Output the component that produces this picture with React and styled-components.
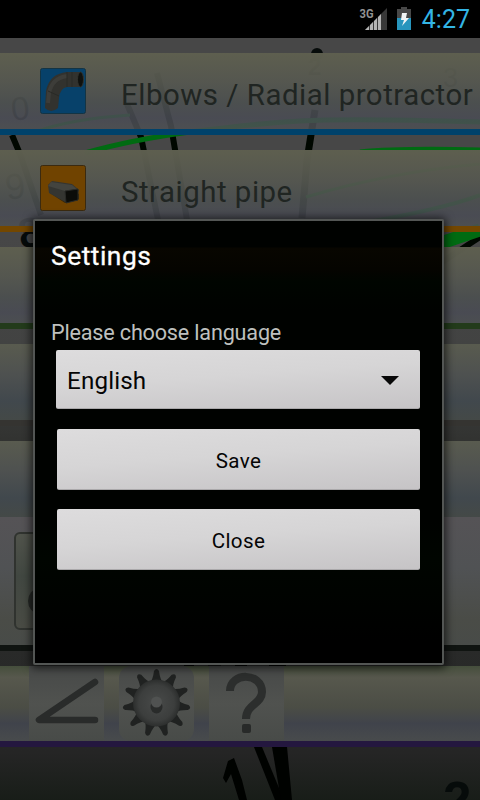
import React, { useState } from "react";
import styled, { createGlobalStyle } from "styled-components";

const GlobalStyle = createGlobalStyle`
  * {
    box-sizing: border-box;
  }
  body {
    margin: 0;
    background: #000;
    font-family: Roboto, "Noto Sans", sans-serif;
  }
`;

const Screen = styled.div`
  position: relative;
  width: 480px;
  height: 800px;
  overflow: hidden;
  display: flex;
  flex-direction: column;
  background: #000;
`;

const StatusBar = styled.header`
  height: 38px;
  flex: none;
  display: flex;
  justify-content: flex-end;
  align-items: flex-start;
  padding: 6px 10px 0 0;
  background: #000;
`;

const StatusIcons = styled.svg`
  display: block;
  margin-right: 9px;
`;

const Clock = styled.span`
  color: #33b5e5;
  font-size: 25px;
  line-height: 28px;
`;

const Page = styled.main`
  position: relative;
  flex: 1;
  padding-top: 15px;
  background: linear-gradient(
    #474747 0,
    #474747 200px,
    #414241 330px,
    #323331 400px,
    #292a29 610px,
    #252525 715px,
    #181d18 762px
  );
`;

const Backdrop = styled.svg`
  position: absolute;
  left: 0;
  top: 0;
`;

const Row = styled.div`
  position: relative;
  display: flex;
  align-items: center;
  height: 82px;
  margin-bottom: 15px;
  padding-left: 40px;
  border-bottom: 6px solid ${props => props.line};
  background: ${props =>
    props.fill ||
    "linear-gradient(rgba(94,95,79,.99), rgba(85,87,80,.94) 40%, rgba(76,80,80,.89) 66%, rgba(74,76,85,.86) 86%, rgba(77,80,83,.86))"};
  background-clip: padding-box;
`;

const RowIcon = styled.svg`
  flex: none;
  width: 46px;
  height: 46px;
`;

const RowLabel = styled.span`
  margin-left: 35px;
  padding-top: 8px;
  white-space: nowrap;
  font-size: 29.4px;
  letter-spacing: 0.52px;
  color: #202522;
`;

const PhotoRow = styled(Row)`
  height: 134px;
  margin-top: -21px;
  padding-left: 14px;
  padding-bottom: 1px;
`;

const PhotoFrame = styled.div`
  display: flex;
  align-items: center;
  width: 98px;
  height: 98px;
  padding: 40px 0 0 12px;
  border: 2px solid #30332f;
  border-radius: 6px;
  background: linear-gradient(#50534b, #414741 45%, #494b44);
`;

const Knob = styled.div`
  width: 20px;
  height: 24px;
  border-radius: 50%;
  background: #252825;
`;

const ToolRow = styled(Row)`
  height: 81px;
  padding-left: 29px;
  gap: 15px;
  margin-bottom: 0;
`;

const Tool = styled.button`
  width: 75px;
  height: 75px;
  padding: 0;
  border: 0;
  border-radius: ${props => (props.round ? 12 : 0)}px;
  background: linear-gradient(#474948, #50524f 50%, #484b48);

  svg {
    display: block;
  }
`;

const Dialog = styled.section`
  position: absolute;
  left: 33px;
  top: 219px;
  width: 411px;
  height: 446px;
  padding: 19px 22px 0 16px;
  border: 2px solid #535654;
  border-radius: 2px;
  background: linear-gradient(#000200, #000200 26px, #080600 27px, #050400 48px, #000500 60px, #000200 90px, #000200 300px, #000500 338px, #000 420px);
  box-shadow: 0 1px 9px 2px rgba(0, 0, 0, 0.65);
`;

const Title = styled.h1`
  margin: 0;
  height: 32px;
  line-height: 32px;
  font-size: 26.4px;
  font-weight: 400;
  letter-spacing: 0.5px;
  color: #fff;
  -webkit-text-stroke: 0.3px #fff;
`;

const Caption = styled.label`
  display: block;
  margin-top: 49px;
  height: 29px;
  line-height: 24px;
  font-size: 21.6px;
  letter-spacing: -0.18px;
  color: #bec0be;
`;

const Surface = styled.button`
  display: flex;
  align-items: center;
  justify-content: center;
  width: 363px;
  height: 61px;
  margin: 0 0 19px 6px;
  padding: 3px 0 0;
  border: 0;
  border-bottom: 1px solid #aaa8aa;
  border-radius: 2px;
  background: linear-gradient(176deg, #dddcdd, #d6d5d6 45%, #c6c4c6);
  font-family: inherit;
  font-size: 20.6px;
  letter-spacing: 0.4px;
  color: #050505;
`;

const Picker = styled(Surface)`
  justify-content: space-between;
  width: 364px;
  height: 59px;
  margin: 0 0 20px 5px;
  padding: 3px 21px 0 11px;
  font-size: 24.2px;
  letter-spacing: 0.15px;
`;

const Arrow = styled.span`
  border: 9px solid transparent;
  border-top-color: #080808;
  border-bottom: 0;
`;

const StatusGlyphs = () => (
  <StatusIcons width="54" height="26" viewBox="0 0 54 26">
    <text x="0.500" y="11.5" fontSize="13" fontWeight="700" fill="#929292" textLength="14" lengthAdjust="spacingAndGlyphs">3G</text>
    <path d="M6 24 28 2V24Z" fill="#383838" />
    <path d="M6 24 10 20V24ZM11 19 14 16V24H11ZM15 15 18 12V24H15ZM19 11 22 8V24H19Z" fill="#b5b5b5" />
    <path d="M38 3h4V1h6v2h4v21H38Z" fill="#484848" />
    <path d="M38 12H52V24H38Z" fill="#2795bd" />
    <path d="M43 7h5l-1 5h3l-7 8 2-6h-3Z" fill="#f2f5f6" />
  </StatusIcons>
);

// Dial face that shows between and through the rows
const DialFace = () => (
  <Backdrop width="480" height="762" viewBox="0 38 480 762" fill="none">
    <g stroke="#000700" strokeWidth="6">
      <path d="M12 135 20 154 41 215" />
      <path d="M127 104 141 137 158 220M157 73 171 126 187 220" />
      <path d="M315 110 307 160 302 218" strokeWidth="7" />
      <path d="M436 266 480 237" />
    </g>
    <g stroke="#006b12" strokeWidth="5">
      <path d="M35 132Q70 119 130 115" strokeWidth="3" />
      <path d="M85 153Q130 140 190 132T300 121T480 122" />
      <path d="M306 197Q390 172 480 164" strokeWidth="3" />
      <path d="M360 152Q400 148 480 150" />
      <path d="M350 225Q440 210 480 195" strokeWidth="4" />
      <path d="M441 243 480 230" strokeWidth="13" />
    </g>
    <g fill="#060b0a" fontFamily="Liberation Sans" fontWeight="700">
      <circle cx="317" cy="54" r="6" />
      <text x="11" y="120" fontSize="33" fontWeight="400" transform="rotate(-6 18 108)">0</text>
      <text x="5" y="199" fontSize="36" fontWeight="400" transform="rotate(-8 14 185)">9</text>
      <text x="18" y="247" fontSize="42" transform="rotate(-10 29 230)">8</text>
      <text x="443" y="87" fontSize="27" fontWeight="400">3</text>
      <text x="308" y="75" fontSize="24">2</text>
      <text x="443" y="818" fontSize="51">2</text>
    </g>
    <g fill="#000200">
      <path d="M254 747H262L284 800H275Z" />
      <path d="M272 747H287L292 800H281Z" />
      <path d="M223 778 228 761 234 758 242 780 247 800H239L231 774 226 783Z" />
    </g>
    <path d="M184 664h10M208 663h13M235 664h12M269 664h17" stroke="#000" strokeWidth="5" />
  </Backdrop>
);

const ElbowIcon = () => (
  <RowIcon viewBox="0 0 46 46">
    <rect x=".5" y=".5" width="45" height="45" rx="2" fill="#07416a" stroke="#143444" />
    <path d="M5 40 6 23Q9 6 27 4H41V19H27Q20 20 19 30L18 40Q11 46 5 40Z" fill="#32322e" />
    <path d="M8 35 9 25Q12 10 27 8" fill="none" stroke="#3d3d39" strokeWidth="4" />
    <path d="M27 4V19M32 4V19M8 23 19 28" stroke="#292a26" />
    <ellipse cx="40.500" cy="11.500" rx="3" ry="7.500" fill="#10110e" stroke="#31332e" />
  </RowIcon>
);

const PipeIcon = () => (
  <RowIcon viewBox="0 0 46 46">
    <rect x=".5" y=".5" width="45" height="45" rx="2" fill="#704300" stroke="#3b2a10" />
    <path d="M10 28 25 38 39 34V29L20 21Z" fill="#382606" />
    <path d="M8 20 12 16 32 19 39 25 34 36 25 37 9 28Z" fill="#343531" />
    <path d="M11 17 32 20 37 24 25 26 8 21Z" fill="#43443f" />
    <path d="M25 26 38 24 38 35 26 38Z" fill="#0b0c09" stroke="#292a27" />
  </RowIcon>
);

const AngleIcon = () => (
  <svg width="75" height="75" viewBox="0 0 75 75">
    <path d="M66 16 10 54H66" fill="none" stroke="#292b2a" strokeWidth="6.500" strokeLinecap="round" strokeLinejoin="round" />
  </svg>
);

const GearIcon = () => (
  <svg width="75" height="75" viewBox="0 0 75 75">
    <defs>
      <radialGradient id="gear">
        <stop offset=".2" stopColor="#454746" />
        <stop offset=".75" stopColor="#3c3e3d" />
        <stop offset="1" stopColor="#2c2e2d" />
      </radialGradient>
    </defs>
    {[...Array(11)].map((_, i) => (
      <path
        key={i}
        d="M31 17Q34 13 35 5Q37.500 1 40 5Q41 13 44 17Z"
        fill="#202221"
        transform={`rotate(${(i * 360) / 11} 37.500 37)`}
      />
    ))}
    <circle cx="37.500" cy="37" r="23.500" fill="url(#gear)" />
    <ellipse cx="37.500" cy="41" rx="6" ry="6.500" fill="#292b2a" />
    <circle cx="37.500" cy="36" r="5.500" fill="#505251" />
  </svg>
);

const HelpIcon = () => (
  <svg width="75" height="75" viewBox="0 0 75 75">
    <path d="M21 25C21 6 53 6 53 26C53 38 37 38 37 53" fill="none" stroke="#2c2e2d" strokeWidth="8" />
    <rect x="33" y="58" width="9" height="9" rx="2" fill="#282a29" />
  </svg>
);

const lowerFill = "linear-gradient(#595b4f, #4e5150 40%, #41484d 75%, #444947)";

function App() {
  const [language] = useState("English");

  return (
    <>
      <GlobalStyle />
      <Screen>
        <StatusBar>
          <StatusGlyphs />
          <Clock>4:27</Clock>
        </StatusBar>
        <Page>
          <DialFace />
          <Row line="#00426b">
            <ElbowIcon />
            <RowLabel>Elbows / Radial protractor</RowLabel>
          </Row>
          <Row line="#734700">
            <PipeIcon />
            <RowLabel>Straight pipe</RowLabel>
          </Row>
          <Row line="#233b1b" />
          <Row line="#353431" fill={lowerFill} />
          <Row line="transparent" fill={lowerFill} />
          <PhotoRow line="#101411" fill="linear-gradient(#555356, #505254 40%, #4a4c47 80%, #484b48)">
            <PhotoFrame>
              <Knob />
            </PhotoFrame>
          </PhotoRow>
          <ToolRow line="#24173f" fill="linear-gradient(#454e3c, #57584d 15%, #4b4d45 55%, #40434b 77%, #484b4c)">
            <Tool><AngleIcon /></Tool>
            <Tool round><GearIcon /></Tool>
            <Tool><HelpIcon /></Tool>
          </ToolRow>
        </Page>
        <Dialog>
          <Title>Settings</Title>
          <Caption>Please choose language</Caption>
          <Picker>
            {language}
            <Arrow />
          </Picker>
          <Surface>Save</Surface>
          <Surface>Close</Surface>
        </Dialog>
      </Screen>
    </>
  );
}

export default App;
